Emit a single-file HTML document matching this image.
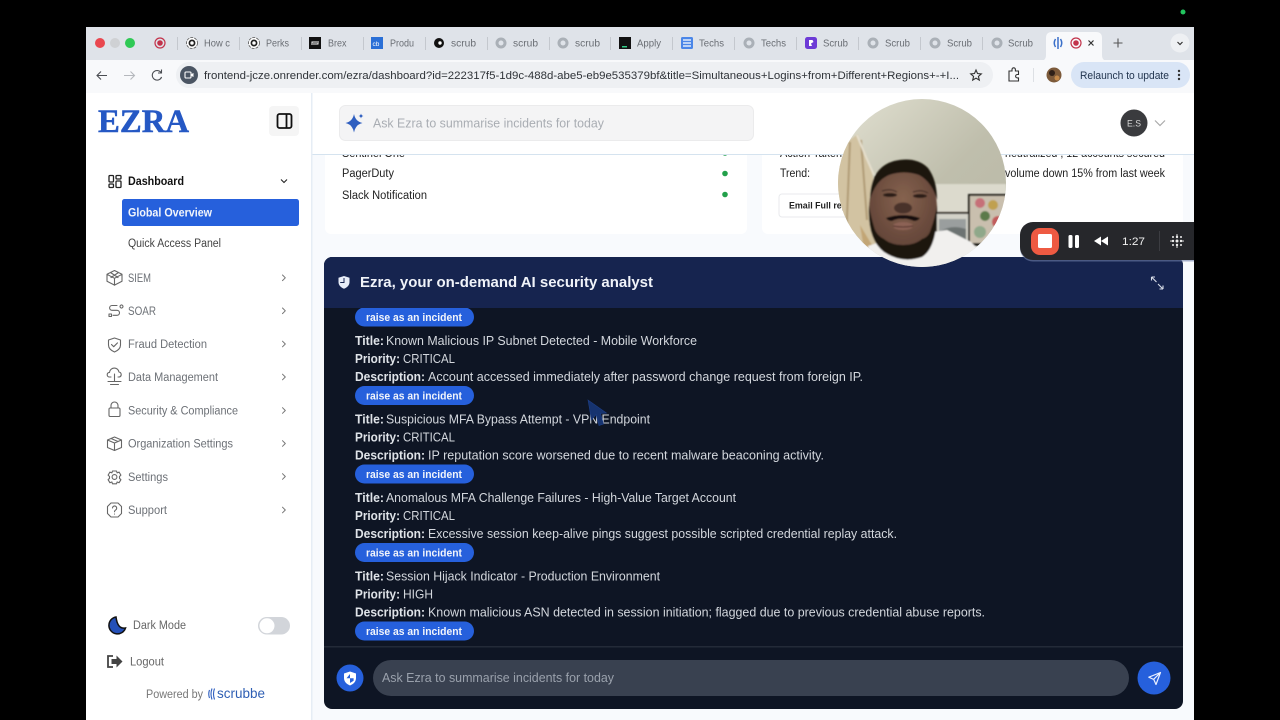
<!DOCTYPE html>
<html><head><meta charset="utf-8"><style>
html,body{margin:0;padding:0;background:#000;width:1280px;height:720px;overflow:hidden}
svg{display:block}
text{font-family:"Liberation Sans",sans-serif}
.t{font-size:10px;fill:#6a6e74}
.n{font-size:11.5px;fill:#6c7076}
.w{font-size:12.5px;fill:#d3d7dd}
.b{font-size:12.5px;fill:#dfe3e8;font-weight:bold}
.r{font-size:11px;fill:#f2f5fb;font-weight:bold}
.c{fill:none;stroke:#666;stroke-width:1.1;stroke-linecap:round;stroke-linejoin:round}
</style></head><body>
<svg width="1280" height="720" viewBox="0 0 1280 720" xmlns="http://www.w3.org/2000/svg">
<defs>
<clipPath id="cam"><circle cx="922" cy="183" r="84"/></clipPath>
<clipPath id="main"><rect x="312" y="155" width="882" height="565"/></clipPath>
<filter id="bl"><feGaussianBlur stdDeviation="0.9"/></filter>
<linearGradient id="wall" x1="0" y1="0" x2="1" y2="1"><stop offset="0" stop-color="#e2e1d2"/><stop offset=".55" stop-color="#bfbeac"/><stop offset="1" stop-color="#b9b8a6"/></linearGradient>
<radialGradient id="skin" cx=".5" cy=".4" r=".6"><stop offset="0" stop-color="#86634f"/><stop offset="1" stop-color="#604236"/></radialGradient>
</defs>
<rect width="1280" height="720" fill="#000"/>
<circle cx="1183" cy="12" r="2.5" fill="#22c55e"/>

<!-- browser chrome -->
<rect x="86" y="27" width="1108" height="34" fill="#dfe3e9"/>
<rect x="86" y="60" width="1108" height="33" fill="#f8f9fb"/>
<circle cx="100" cy="43" r="5" fill="#e9474f"/><circle cx="115" cy="43" r="5" fill="#cfd1d4"/><circle cx="130" cy="43" r="5" fill="#2fc955"/>
<circle cx="160" cy="43" r="5" fill="none" stroke="#c2334b" stroke-width="1.2"/><circle cx="160" cy="43" r="2.8" fill="#c2334b"/>
<g fill="#c4c8ce"><rect x="177" y="37" width="1" height="13"/><rect x="239" y="37" width="1" height="13"/><rect x="301" y="37" width="1" height="13"/><rect x="363" y="37" width="1" height="13"/><rect x="425" y="37" width="1" height="13"/><rect x="487" y="37" width="1" height="13"/><rect x="549" y="37" width="1" height="13"/><rect x="610" y="37" width="1" height="13"/><rect x="672" y="37" width="1" height="13"/><rect x="734" y="37" width="1" height="13"/><rect x="796" y="37" width="1" height="13"/><rect x="858" y="37" width="1" height="13"/><rect x="920" y="37" width="1" height="13"/><rect x="982" y="37" width="1" height="13"/></g>
<!-- tab icons -->
<circle cx="192" cy="43" r="5.5" fill="#fff" stroke="#555" stroke-width=".8" stroke-dasharray="3 1"/><circle cx="192" cy="43" r="2.6" fill="none" stroke="#222" stroke-width="1.7"/>
<circle cx="254" cy="43" r="5.5" fill="#fff" stroke="#555" stroke-width=".8" stroke-dasharray="3 1"/><circle cx="254" cy="43" r="2.6" fill="none" stroke="#222" stroke-width="1.7"/>
<rect x="309" y="37" width="12" height="12" fill="#111"/><path d="M312 45v-3h5M318 41v3h-5" stroke="#fff" fill="none"/>
<rect x="371" y="37" width="12" height="12" fill="#2a6fd6"/><text x="372.5" y="46" font-size="6.5" fill="#fff">cb</text>
<circle cx="439" cy="43" r="5" fill="#111"/><circle cx="440" cy="43" r="1.7" fill="#fff"/>
<g fill="#aab0b7"><circle cx="501" cy="43" r="5.5"/><circle cx="563" cy="43" r="5.5"/><circle cx="749" cy="43" r="5.5"/><circle cx="873" cy="43" r="5.5"/><circle cx="935" cy="43" r="5.5"/><circle cx="997" cy="43" r="5.5"/></g>
<g fill="#dfe3e9"><circle cx="501" cy="43" r="2.5"/><circle cx="563" cy="43" r="2.5"/><circle cx="749" cy="43" r="2.5"/><circle cx="873" cy="43" r="2.5"/><circle cx="935" cy="43" r="2.5"/><circle cx="997" cy="43" r="2.5"/></g>
<rect x="619" y="37" width="12" height="12" fill="#111"/><rect x="622" y="46" width="5" height="1.5" fill="#3c8"/>
<rect x="681" y="37" width="12" height="12" rx="1.5" fill="#4a86e8"/><path d="M683 40h8M683 43h8M683 46h8" stroke="#fff" stroke-width="1.2"/>
<rect x="805" y="37" width="12" height="12" rx="2.5" fill="#6d3bd6"/><path d="M809 40h3.5l1 2-2.5 1.5 1 2.500h-3z" fill="#fff"/>
<g class="t">
<text x="204" y="46.500" textLength="26" lengthAdjust="spacingAndGlyphs">How c</text><text x="266" y="46.500" textLength="23" lengthAdjust="spacingAndGlyphs">Perks</text><text x="328" y="46.500" textLength="18.500" lengthAdjust="spacingAndGlyphs">Brex</text><text x="390" y="46.500" textLength="24" lengthAdjust="spacingAndGlyphs">Produ</text><text x="451" y="46.500" textLength="25" lengthAdjust="spacingAndGlyphs">scrub</text><text x="513" y="46.500" textLength="25" lengthAdjust="spacingAndGlyphs">scrub</text><text x="575" y="46.500" textLength="25" lengthAdjust="spacingAndGlyphs">scrub</text><text x="637" y="46.500" textLength="24" lengthAdjust="spacingAndGlyphs">Apply</text><text x="699" y="46.500" textLength="25" lengthAdjust="spacingAndGlyphs">Techs</text><text x="761" y="46.500" textLength="25" lengthAdjust="spacingAndGlyphs">Techs</text><text x="823" y="46.500" textLength="25" lengthAdjust="spacingAndGlyphs">Scrub</text><text x="885" y="46.500" textLength="25" lengthAdjust="spacingAndGlyphs">Scrub</text><text x="947" y="46.500" textLength="25" lengthAdjust="spacingAndGlyphs">Scrub</text><text x="1008" y="46.500" textLength="25" lengthAdjust="spacingAndGlyphs">Scrub</text>
</g>
<path d="M1040 61q6 0 6-6V38q0-6 6-6h44q6 0 6 6v17q0 6 6 6z" fill="#f8f9fb"/>
<path d="M1058 37v12M1055.500 39q-2.500 4 0 8M1060.500 39q2.500 4 0 8" stroke="#3a6fc9" stroke-width="1.5" fill="none"/>
<circle cx="1076" cy="43" r="5" fill="none" stroke="#c2334b" stroke-width="1.2"/><circle cx="1076" cy="43" r="2.8" fill="#c2334b"/>
<path d="M1088.500 40.500l5 5M1093.500 40.500l-5 5" stroke="#333" stroke-width="1.2"/>
<path d="M1118 38.500v9M1113.500 43h9" stroke="#555" stroke-width="1.1"/>
<circle cx="1180" cy="43" r="9.500" fill="#eef0f3"/><path d="M1177.500 42l2.500 2.500 2.500-2.500" stroke="#333" stroke-width="1.2" fill="none"/>
<path d="M107 75.500H97.500M101 71.500l-4 4 4 4" stroke="#4a4d52" stroke-width="1.1" fill="none"/>
<path d="M124 75.500h10M130.500 71.500l4 4-4 4" stroke="#b5b8bd" stroke-width="1.1" fill="none"/>
<path d="M161 72.500a4.800 4.800 0 1 0 .6 4.500M161.500 69.500v3.500H158" stroke="#4a4d52" stroke-width="1.1" fill="none"/>
<rect x="176" y="62" width="817" height="26" rx="13" fill="#eef0f3"/>
<circle cx="189" cy="75" r="9" fill="#4b5563"/><rect x="185" y="72" width="6" height="6" rx="1" fill="none" stroke="#fff" stroke-width="1.1"/><path d="M191.500 74l2-1v4l-2-1z" fill="#fff"/>
<text x="204" y="79" font-size="11" fill="#2f3338" textLength="755" lengthAdjust="spacingAndGlyphs">frontend-jcze.onrender.com/ezra/dashboard?id=222317f5-1d9c-488d-abe5-eb9e535379bf&amp;title=Simultaneous+Logins+from+Different+Regions+-+I...</text>
<path d="M976 70l1.500 3.500 3.800.4-2.900 2.500.9 3.700-3.300-2-3.300 2 .9-3.700-2.900-2.500 3.800-.4z" fill="none" stroke="#333" stroke-width="1.100"/>
<path d="M1009 71h3v-1.500a1.700 1.700 0 0 1 3.400 0V71h3.100v3.500h-1.200a1.700 1.700 0 0 0 0 3.400h1.200V81h-9.500z" fill="none" stroke="#333" stroke-width="1.100"/>
<rect x="1033" y="68" width="1" height="14" fill="#dde0e4"/>
<circle cx="1054" cy="75" r="7.500" fill="#7c5a3a"/><circle cx="1052" cy="73" r="3" fill="#2e2018"/><circle cx="1057" cy="78" r="2.500" fill="#c48a4a"/>
<rect x="1071" y="62" width="119" height="26" rx="13" fill="#d9e5f6"/>
<text x="1080" y="79" font-size="11" fill="#22354f" textLength="89" lengthAdjust="spacingAndGlyphs">Relaunch to update</text>
<g fill="#333"><circle cx="1179" cy="71" r="1.2"/><circle cx="1179" cy="75" r="1.2"/><circle cx="1179" cy="79" r="1.2"/></g>

<!-- page bg -->
<rect x="86" y="93" width="1108" height="627" fill="#f8fafd"/>
<!-- cards -->
<rect x="325" y="140" width="422" height="94" rx="6" fill="#fff"/>
<rect x="762" y="140" width="421" height="94" rx="6" fill="#fff"/>
<g clip-path="url(#main)">
<text x="342" y="157" font-size="11.5" fill="#222" textLength="63" lengthAdjust="spacingAndGlyphs">Sentinel One</text>
<circle cx="725" cy="153" r="2.8" fill="#22a04a"/>
<text x="780" y="157" font-size="11.5" fill="#222" textLength="62" lengthAdjust="spacingAndGlyphs">Action Taken</text>
<text x="1005" y="157" font-size="11.5" fill="#222" textLength="160" lengthAdjust="spacingAndGlyphs">neutralized , 12 accounts secured</text>
</g>
<text x="342" y="177" font-size="11.5" fill="#222" textLength="52" lengthAdjust="spacingAndGlyphs">PagerDuty</text>
<text x="342" y="199" font-size="11.5" fill="#222" textLength="85" lengthAdjust="spacingAndGlyphs">Slack Notification</text>
<circle cx="725" cy="173.500" r="2.8" fill="#22a04a"/><circle cx="725" cy="194.500" r="2.8" fill="#22a04a"/>
<text x="780" y="177" font-size="11.5" fill="#222" textLength="30" lengthAdjust="spacingAndGlyphs">Trend:</text>
<text x="1005" y="177" font-size="11.5" fill="#222" textLength="160" lengthAdjust="spacingAndGlyphs">volume down 15% from last week</text>
<rect x="779" y="194" width="90" height="23" rx="3" fill="#fff" stroke="#e8eaed"/>
<text x="789" y="208.500" font-size="9.5" font-weight="bold" fill="#222" textLength="70" lengthAdjust="spacingAndGlyphs">Email Full report</text>

<!-- header -->
<rect x="86" y="93" width="1108" height="61" fill="#fff"/>
<rect x="312" y="154" width="882" height="1" fill="#d5e3ef"/>
<rect x="339.500" y="105.500" width="414" height="35" rx="6" fill="#f4f4f5" stroke="#ebebec"/>
<path d="M354 114q1.500 7.500 8.500 9-7 1.500-8.500 9.500-1.500-8-8.500-9.500 7-1.500 8.500-9z" fill="#2f5fc0"/><path d="M361 113.500q.4 2.100 2.500 2.500-2.100.4-2.500 2.500-.4-2.100-2.500-2.500 2.100-.4 2.500-2.500z" fill="#2f5fc0"/>
<text x="373" y="127.500" font-size="12.5" fill="#a9adb3" textLength="231" lengthAdjust="spacingAndGlyphs">Ask Ezra to summarise incidents for today</text>
<circle cx="1134" cy="123" r="13.5" fill="#3a3b3e"/><text x="1127" y="126.500" font-size="9" fill="#d8d8d8" textLength="14" lengthAdjust="spacingAndGlyphs">E.S</text>
<path d="M1155 120.500l5 5 5-5" fill="none" stroke="#aaa" stroke-width="1.2"/>

<!-- sidebar -->
<rect x="86" y="93" width="225" height="627" fill="#fff"/>
<rect x="311" y="93" width="1.5" height="627" fill="#e6edf5"/>
<text x="98" y="132" font-size="33" font-weight="bold" fill="#2558c4" stroke="#2558c4" stroke-width=".5" textLength="91" lengthAdjust="spacingAndGlyphs" style="font-family:'Liberation Serif',serif">EZRA</text>
<rect x="269" y="106" width="30" height="30" rx="4" fill="#f5f5f5"/>
<rect x="277.500" y="114" width="14" height="14" rx="2" fill="none" stroke="#111" stroke-width="1.8"/><path d="M286.500 114v14" stroke="#111" stroke-width="1.8"/>
<g fill="none" stroke="#222" stroke-width="1.3"><rect x="109" y="175.500" width="4.500" height="6.500" rx="1"/><rect x="116" y="175.500" width="5" height="3.500" rx="1"/><rect x="109" y="184" width="4.500" height="3.500" rx="1"/><rect x="116" y="181" width="5" height="6.500" rx="1"/></g>
<text x="128" y="185" font-size="11.5" font-weight="bold" fill="#111" textLength="56" lengthAdjust="spacingAndGlyphs">Dashboard</text>
<path d="M281 179.500l3 3 3-3" fill="none" stroke="#222" stroke-width="1.100"/>
<rect x="122" y="199" width="177" height="27" rx="2.5" fill="#2660dc"/>
<text x="128" y="216.500" font-size="11.5" font-weight="bold" fill="#f2f5fb" textLength="84" lengthAdjust="spacingAndGlyphs">Global Overview</text>
<text x="128" y="247" font-size="11.5" fill="#444" textLength="93" lengthAdjust="spacingAndGlyphs">Quick Access Panel</text>
<g class="n">
<text x="128" y="282" textLength="23" lengthAdjust="spacingAndGlyphs">SIEM</text><text x="128" y="315" textLength="28" lengthAdjust="spacingAndGlyphs">SOAR</text><text x="128" y="348" textLength="79" lengthAdjust="spacingAndGlyphs">Fraud Detection</text><text x="128" y="381" textLength="90" lengthAdjust="spacingAndGlyphs">Data Management</text><text x="128" y="414.500" textLength="110" lengthAdjust="spacingAndGlyphs">Security &amp; Compliance</text><text x="128" y="447.500" textLength="105" lengthAdjust="spacingAndGlyphs">Organization Settings</text><text x="128" y="481" textLength="40" lengthAdjust="spacingAndGlyphs">Settings</text><text x="128" y="514" textLength="39" lengthAdjust="spacingAndGlyphs">Support</text>
</g>
<g class="c" style="stroke:#777;stroke-width:1"><path d="M282.500 275l2.800 2.800-2.800 2.800M282.500 308l2.800 2.800-2.800 2.800M282.500 341.200l2.800 2.800-2.800 2.800M282.500 374.200l2.800 2.800-2.800 2.800M282.500 407.700l2.800 2.800-2.800 2.800M282.500 440.700l2.800 2.800-2.800 2.800M282.500 473.700l2.800 2.800-2.800 2.800M282.500 507.200l2.800 2.800-2.800 2.800"/></g>
<g class="c">
<path d="M114.500 270.500l7.500 3.800v7l-7.500 3.800-7.500-3.800v-7zM107 274.300l7.500 4 7.500-4M114.500 278.300v7M110.500 272.500l7.500 5M118.500 272.500l-7.500 5"/>
<path d="M120 306.500a1.500 1.500 0 1 1 0 .01M117 305.500h-5a2.400 2.400 0 0 0 0 4.800h5a2.500 2.500 0 0 1 0 5h-4M109 314h2.500v2.500H109z"/>
<path d="M114.500 338l6 2v5c0 3.200-2.500 5.500-6 7-3.500-1.500-6-3.800-6-7v-5zM111.500 344.500l2.200 2.200 3.800-3.800"/>
<path d="M111 377h-1.500a2.300 2.300 0 0 1 0-4.600 4.800 4.800 0 0 1 9.500-.4 2.600 2.600 0 0 1 .5 5H118M114.500 374v7.500M108 381.500h13M110.500 384.500h8"/>
<rect x="109" y="408" width="11" height="8.5" rx="1.2"/><path d="M111 408v-2.500a3.500 3.500 0 0 1 7 0V408"/>
<path d="M114.500 437l7 3v7.500l-7 3-7-3V440zM107.500 440l7 3 7-3M114.500 443v7.500M111 438.500l7 3"/>
<circle cx="114.500" cy="477" r="2.4"/><path d="M112.500 471h4l.6 1.800 2-.7 1.800 3-1.400 1.400v1.800l1.400 1.400-1.800 3-2-.7-.6 1.800h-4l-.6-1.800-2 .7-1.800-3 1.400-1.400v-1.800l-1.400-1.400 1.800-3 2 .7z"/>
<path d="M111 503h7l3.500 3.500v7L118 517h-7l-3.500-3.500v-7z"/><path d="M112.500 508a2.100 2.100 0 1 1 3.300 1.800c-.8.500-1.300 1-1.300 2M114.500 514v.1"/>
</g>
<path d="M116 617a8.500 8.500 0 1 0 9.500 11q-8 1.500-9.500-11z" fill="#2450b8" stroke="#111" stroke-width="1.500"/>
<text x="133" y="629" font-size="11.5" fill="#666" textLength="53" lengthAdjust="spacingAndGlyphs">Dark Mode</text>
<rect x="258" y="617" width="32" height="17.5" rx="8.8" fill="#d2d5da"/><circle cx="267" cy="625.800" r="7.500" fill="#fff"/>
<path d="M113 656h-5v11h5" fill="none" stroke="#444" stroke-width="1.800"/><path d="M111.500 659h5v-3.500l6 6-6 6V664h-5z" fill="#444"/>
<text x="130" y="665.500" font-size="11.5" fill="#666" textLength="34" lengthAdjust="spacingAndGlyphs">Logout</text>
<text x="146" y="698" font-size="11.5" fill="#777" textLength="57" lengthAdjust="spacingAndGlyphs">Powered by</text>
<path d="M209.500 690q-1.500 4 0 8M212 688.500q-2 5.500 0 11M214.500 688.500q-2 5.500 0 11" fill="none" stroke="#2f5fc0" stroke-width="1.1"/>
<text x="217" y="698" font-size="14" fill="#2f5fb4" textLength="48" lengthAdjust="spacingAndGlyphs">scrubbe</text>

<!-- chat panel -->
<rect x="324" y="257" width="859" height="452" rx="8" fill="#0e1524"/>
<path d="M324 308v-43a8 8 0 0 1 8-8h843a8 8 0 0 1 8 8v43z" fill="#16244f"/>
<path d="M344 276l5.500 1.800v4.200c0 3.400-2.300 5.400-5.500 6.800-3.200-1.400-5.500-3.400-5.500-6.800v-4.200z" fill="#e8edf8"/><path d="M344 278v4.500h-3.800" fill="none" stroke="#16244f" stroke-width="1"/>
<text x="360" y="287" font-size="15" font-weight="bold" fill="#f0f3f9" textLength="293" lengthAdjust="spacingAndGlyphs">Ezra, your on-demand AI security analyst</text>
<path d="M1151.500 277l5 5M1151.500 277h3.500M1151.500 277v3.500M1163 289l-5-5M1163 289h-3.500M1163 289v-3.500" stroke="#d8dde8" stroke-width="1.1" fill="none"/>
<g>
<rect x="355" y="307.500" width="119" height="19" rx="9.5" fill="#2660dc"/><rect x="355" y="386" width="119" height="19" rx="9.5" fill="#2660dc"/><rect x="355" y="464.500" width="119" height="19" rx="9.5" fill="#2660dc"/><rect x="355" y="543" width="119" height="19" rx="9.5" fill="#2660dc"/><rect x="355" y="621.500" width="119" height="19" rx="9.5" fill="#2660dc"/>
<text class="r" x="366" y="321" textLength="96" lengthAdjust="spacingAndGlyphs">raise as an incident</text><text class="r" x="366" y="399.500" textLength="96" lengthAdjust="spacingAndGlyphs">raise as an incident</text><text class="r" x="366" y="478" textLength="96" lengthAdjust="spacingAndGlyphs">raise as an incident</text><text class="r" x="366" y="556.500" textLength="96" lengthAdjust="spacingAndGlyphs">raise as an incident</text><text class="r" x="366" y="635" textLength="96" lengthAdjust="spacingAndGlyphs">raise as an incident</text>
</g>
<rect x="324" y="307" width="859" height="1" fill="#16244f"/>
<text class="b" x="355" y="345" textLength="29" lengthAdjust="spacingAndGlyphs">Title:</text><text class="w" x="386" y="345" textLength="311" lengthAdjust="spacingAndGlyphs">Known Malicious IP Subnet Detected - Mobile Workforce</text>
<text class="b" x="355" y="363" textLength="45" lengthAdjust="spacingAndGlyphs">Priority:</text><text class="w" x="403" y="363" textLength="52" lengthAdjust="spacingAndGlyphs">CRITICAL</text>
<text class="b" x="355" y="381" textLength="70" lengthAdjust="spacingAndGlyphs">Description:</text><text class="w" x="428" y="381" textLength="435" lengthAdjust="spacingAndGlyphs">Account accessed immediately after password change request from foreign IP.</text>
<text class="b" x="355" y="423.500" textLength="29" lengthAdjust="spacingAndGlyphs">Title:</text><text class="w" x="386" y="423.500" textLength="264" lengthAdjust="spacingAndGlyphs">Suspicious MFA Bypass Attempt - VPN Endpoint</text>
<text class="b" x="355" y="441.500" textLength="45" lengthAdjust="spacingAndGlyphs">Priority:</text><text class="w" x="403" y="441.500" textLength="52" lengthAdjust="spacingAndGlyphs">CRITICAL</text>
<text class="b" x="355" y="459.500" textLength="70" lengthAdjust="spacingAndGlyphs">Description:</text><text class="w" x="428" y="459.500" textLength="396" lengthAdjust="spacingAndGlyphs">IP reputation score worsened due to recent malware beaconing activity.</text>
<text class="b" x="355" y="502" textLength="29" lengthAdjust="spacingAndGlyphs">Title:</text><text class="w" x="386" y="502" textLength="350" lengthAdjust="spacingAndGlyphs">Anomalous MFA Challenge Failures - High-Value Target Account</text>
<text class="b" x="355" y="520" textLength="45" lengthAdjust="spacingAndGlyphs">Priority:</text><text class="w" x="403" y="520" textLength="52" lengthAdjust="spacingAndGlyphs">CRITICAL</text>
<text class="b" x="355" y="538" textLength="70" lengthAdjust="spacingAndGlyphs">Description:</text><text class="w" x="428" y="538" textLength="469" lengthAdjust="spacingAndGlyphs">Excessive session keep-alive pings suggest possible scripted credential replay attack.</text>
<text class="b" x="355" y="580.500" textLength="29" lengthAdjust="spacingAndGlyphs">Title:</text><text class="w" x="386" y="580.500" textLength="274" lengthAdjust="spacingAndGlyphs">Session Hijack Indicator - Production Environment</text>
<text class="b" x="355" y="598.500" textLength="45" lengthAdjust="spacingAndGlyphs">Priority:</text><text class="w" x="403" y="598.500" textLength="30" lengthAdjust="spacingAndGlyphs">HIGH</text>
<text class="b" x="355" y="616.500" textLength="70" lengthAdjust="spacingAndGlyphs">Description:</text><text class="w" x="428" y="616.500" textLength="557" lengthAdjust="spacingAndGlyphs">Known malicious ASN detected in session initiation; flagged due to previous credential abuse reports.</text>
<path d="M588 400l3.500 20 4.500-5.500 3 11 4.500-1.500-3-10.500 6-.5z" fill="#16336f" stroke="#1d3f88" stroke-width=".6"/>
<rect x="324" y="646" width="859" height="1.5" fill="#232a38"/>
<circle cx="350" cy="678" r="13.5" fill="#2660dc"/>
<path d="M350 671.500l6 2v4.500c0 3.700-2.600 6-6 7.500-3.400-1.500-6-3.800-6-7.500v-4.500z" fill="#fff"/><path d="M350 674v4.200h-3.500M350 678.200h3.600v2.500l-3.600 2.300z" fill="#2660dc"/>
<rect x="373" y="660" width="756" height="36" rx="18" fill="#394150"/>
<text x="382" y="682" font-size="12.5" fill="#9aa1ac" textLength="232" lengthAdjust="spacingAndGlyphs">Ask Ezra to summarise incidents for today</text>
<circle cx="1154" cy="678" r="16.5" fill="#2660dc"/>
<path d="M1160.500 672.500l-4.500 12-2.200-5-5-2.300zM1160.500 672.500l-6.700 6.700" fill="none" stroke="#eaf0ff" stroke-width="1.200" stroke-linejoin="round"/>

<!-- recording bar -->
<rect x="1020" y="223.500" width="230" height="38" rx="13" fill="#6f7fa8" opacity=".6"/>
<rect x="1020" y="222" width="230" height="38" rx="13" fill="#26272b"/>
<rect x="1031" y="228" width="28" height="27" rx="9" fill="#ee5a42"/><rect x="1038" y="234" width="14" height="14" rx="1.5" fill="#fff"/>
<rect x="1068.500" y="235" width="4" height="13" rx="1.5" fill="#fff"/><rect x="1075" y="235" width="4" height="13" rx="1.5" fill="#fff"/>
<path d="M1094 241l7-4.500v9zM1101 241l7-4.500v9z" fill="#fff"/>
<text x="1122" y="245" font-size="11" fill="#f0f0f0" textLength="23" lengthAdjust="spacingAndGlyphs">1:27</text>
<rect x="1159" y="231" width="1" height="20" fill="#3c3d42"/>
<g fill="#eee"><circle cx="1177" cy="241" r="1.5"/><circle cx="1173" cy="241" r="1.2"/><circle cx="1181" cy="241" r="1.2"/><circle cx="1177" cy="237" r="1.2"/><circle cx="1177" cy="245" r="1.2"/><circle cx="1173" cy="237" r="1"/><circle cx="1181" cy="237" r="1"/><circle cx="1173" cy="245" r="1"/><circle cx="1181" cy="245" r="1"/><circle cx="1171" cy="241" r=".8"/><circle cx="1183" cy="241" r=".8"/><circle cx="1177" cy="235" r=".8"/><circle cx="1177" cy="247" r=".8"/></g>
<rect x="1194" y="93" width="86" height="627" fill="#000"/>

<!-- webcam -->
<g clip-path="url(#cam)">
<rect x="838" y="99" width="168" height="168" fill="url(#wall)"/>
<rect x="900" y="184" width="106" height="83" fill="#dcdacd" filter="url(#bl)"/>
<g filter="url(#bl)">
<path d="M836 150l22-16 12 30 8 35-4 70h-38z" fill="#d2c3a2"/>
<path d="M850 142l-4 100M861 140l6 80" stroke="#b09b76" stroke-width="2" fill="none"/>
<path d="M857 135l9 22 8 18" stroke="#e6e0cf" stroke-width="2" fill="none"/>
<path d="M860 225l15 25-10 5z" fill="#c2a574"/>
<rect x="935" y="212" width="36" height="38" fill="#3a362f"/><rect x="937" y="214" width="32" height="34" fill="#d3d2c8"/><rect x="939" y="219" width="27" height="24" fill="#9a9e9e"/><path d="M939 232q12-8 27-3v14h-27z" fill="#6d7372"/>
<rect x="968" y="194" width="40" height="52" fill="#1e1b17"/><rect x="970" y="196" width="38" height="47" fill="#c9bfae"/>
<circle cx="980" cy="203" r="5" fill="#c66f78"/><circle cx="993" cy="205" r="5" fill="#c0a050"/><circle cx="985" cy="216" r="5" fill="#5c7a48"/><circle cx="998" cy="222" r="6" fill="#c25c5c"/><circle cx="980" cy="232" r="6" fill="#8fa88a"/><circle cx="995" cy="236" r="5" fill="#4a6c4a"/>
<path d="M868 246l24-8 55-8 24 12 10 10-20 18h-90z" fill="#f1f0ee"/>
<ellipse cx="903" cy="208" rx="34" ry="44" fill="url(#skin)"/>
<path d="M870 200q0-32 24-39 22-5 34 7 9 12 9 32-5-18-18-25-15-5-30 0-14 6-19 25z" fill="#1c1410"/>
<path d="M869 205q-2 34 15 47 18 12 38 5 16-10 15-52-2 13-6 24-2 8-9 10-7 6-19 6-12 0-19-6-8-4-10-12-3-10-5-22z" fill="#1a120f"/>
<path d="M886 218q17-6 34 0-2 3-6 3-8-3-11-2-5-1-11 2-4 0-6-3z" fill="#17100d"/>
<ellipse cx="903" cy="226" rx="10" ry="4" fill="#8c6255"/>
<path d="M893 226q10 2 20 0" stroke="#4a2c25" fill="none"/>
<ellipse cx="903" cy="208" rx="9" ry="5.500" fill="#49302a"/>
<ellipse cx="890" cy="195" rx="7" ry="2" fill="#2a1c17"/><ellipse cx="920" cy="196" rx="7" ry="2" fill="#2a1c17"/>
<path d="M882 191q8-3 15 1M913 192q8-3 15 1" stroke="#3a2620" fill="none"/>
</g>
</g>
</svg>
</body></html>
